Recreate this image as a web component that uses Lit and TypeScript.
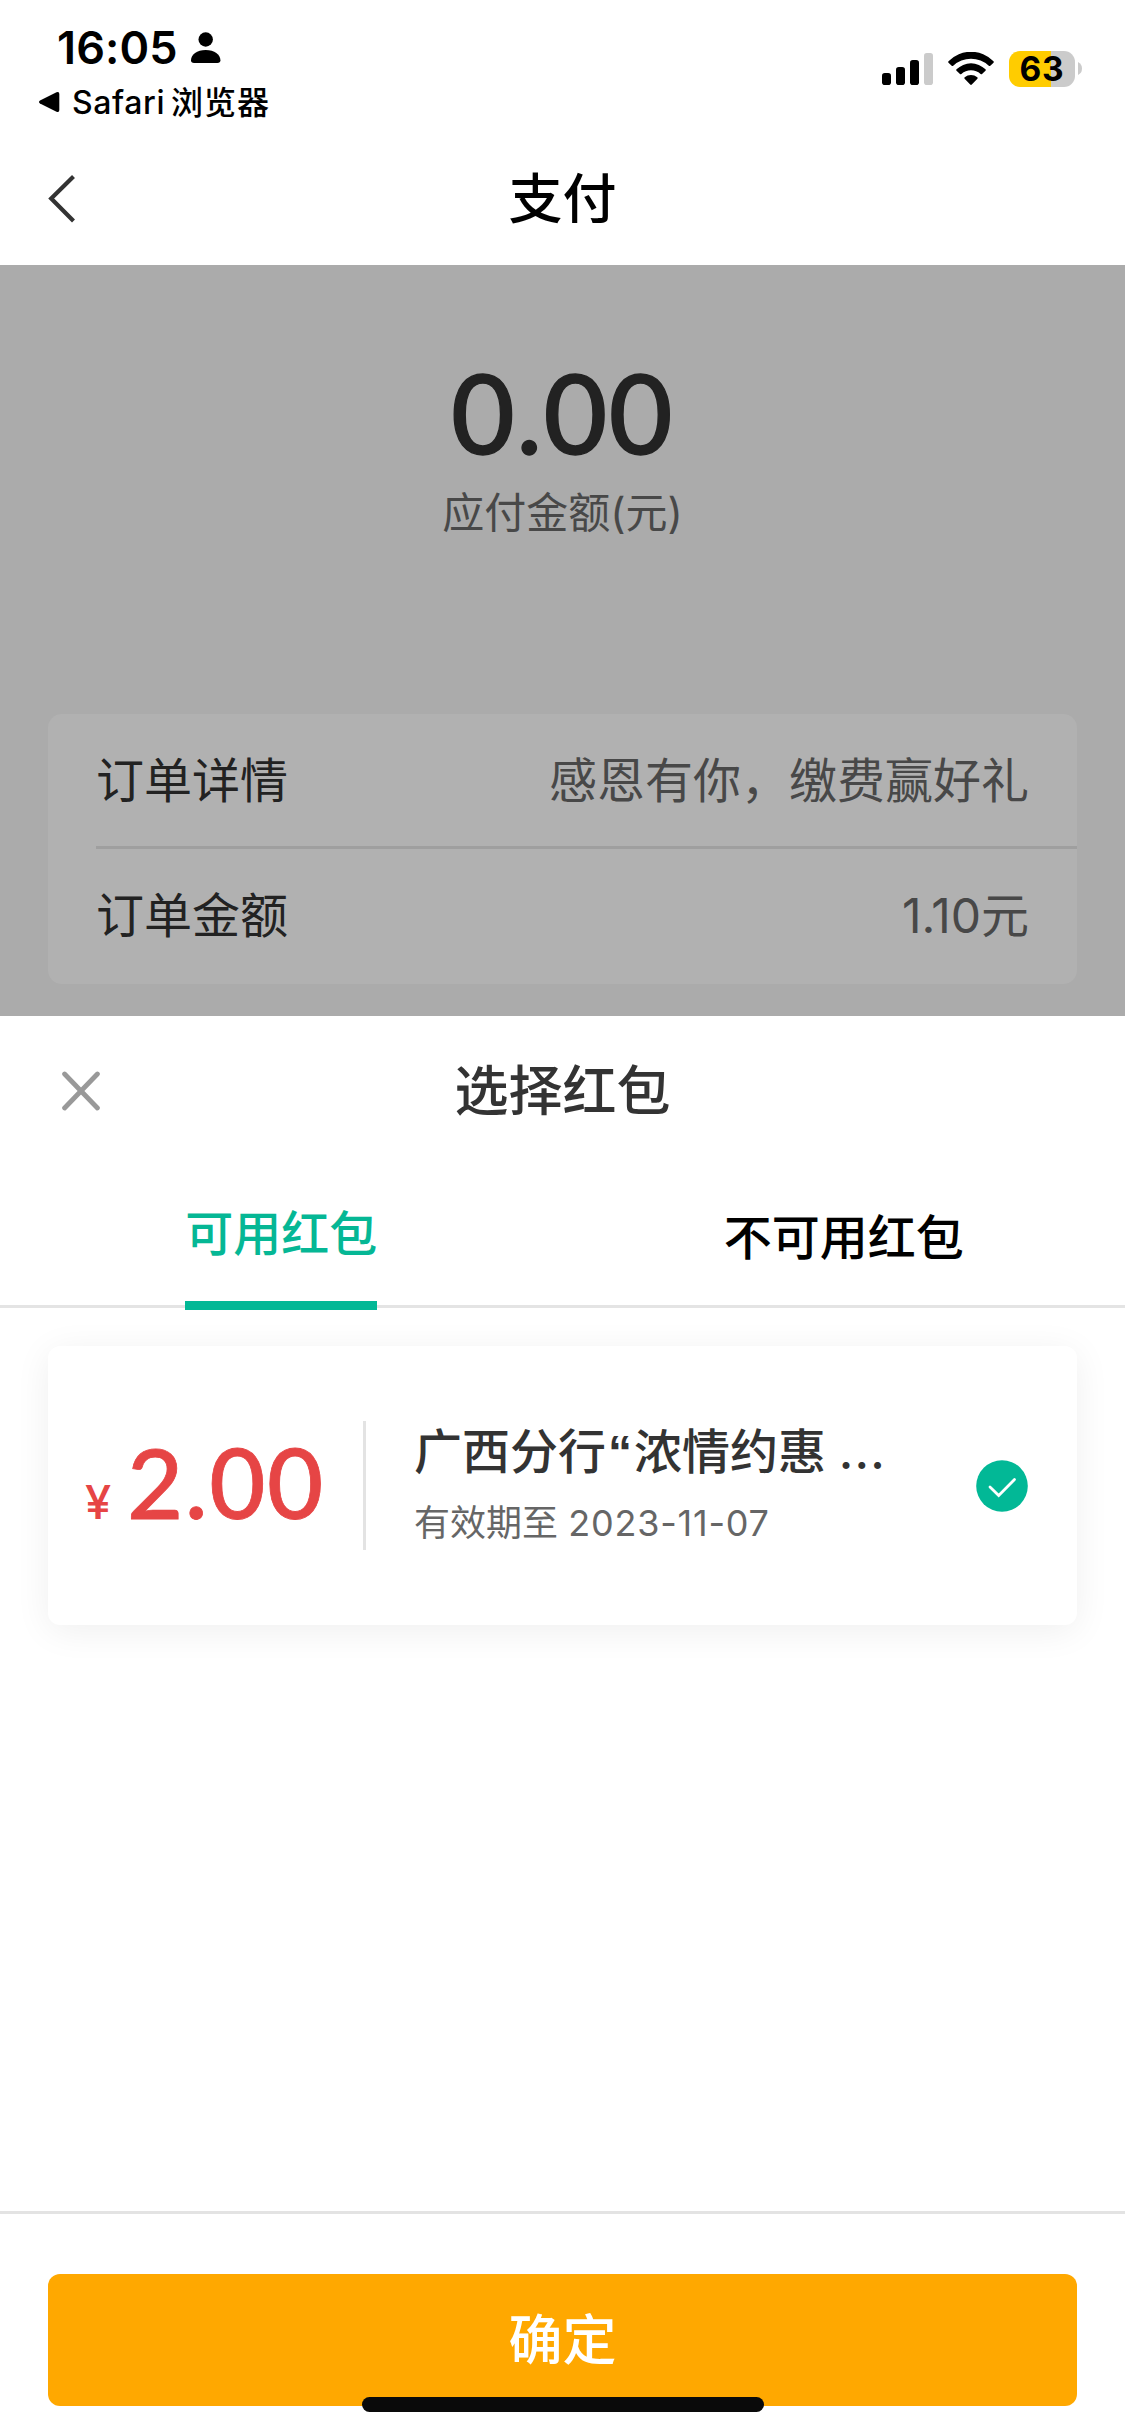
import { LitElement, html, css } from "lit";
import { customElement, property } from "lit/decorators.js";

@customElement("status-bar")
class StatusBar extends LitElement {
  static styles = css`
    :host { display: flex; justify-content: space-between; height: 132px; color: #000; }
    .left { display: flex; flex-direction: column; padding: 21px 0 0 39px; }
    .clock { display: flex; align-items: center; height: 54px; padding-left: 18px; }
    .clock svg { margin-top: -1px; }
    .time { font-size: 45px; font-weight: 600; letter-spacing: 0.1px; line-height: 54px; width: 134px; }
    .back { display: flex; align-items: center; height: 48px; margin-top: 3px; }
    .app { font-size: 32px; font-weight: 500; line-height: 50px; padding-top: 2px; margin-left: 12px; letter-spacing: 0.6px; display: flex; gap: 6px; }
    .cjk { letter-spacing: 1px; }
    .right { display: flex; align-items: flex-start; padding: 51px 43px 0 0; }
    .signal { margin: 2px 15px 0 0; }
    .wifi { margin: 1px 15px 0 0; }
    .battery { width: 66px; height: 36px; border-radius: 11px; line-height: 37px; text-align: center;
      font-size: 33.5px; font-weight: 650; letter-spacing: 0.8px;
      background: linear-gradient(90deg, #ffcc00 63%, #cbcbcb 63%); }
    .nub { margin: 11px 0 0 3px; }
    svg { display: block; }
  `;
  render() {
    return html`
      <div class="left">
        <div class="clock">
          <span class="time">16:05</span>
          <svg width="30" height="32" viewBox="0 0 30 32">
            <circle cx="14.7" cy="7.5" r="7.2" />
            <path d="M3 31C1 31 0 30 0 28.3C0 22.8 6 18 14.7 18S29.4 22.8 29.4 28.3C29.4 30 28.4 31 26.4 31Z" />
          </svg>
        </div>
        <div class="back">
          <svg width="21" height="22" viewBox="0 0 21 22">
            <path d="M1 9.6L17.5 1.3Q20.3.2 20.3 3V19Q20.3 21.8 17.5 20.7L1 12.6Q-1 11.1 1 9.6Z" />
          </svg>
          <span class="app"><span>Safari</span><span class="cjk">浏览器</span></span>
        </div>
      </div>
      <div class="right">
        <svg class="signal" width="51" height="32" viewBox="0 0 51 32">
          <rect x="0" y="20" width="9" height="12" rx="2.8" />
          <rect x="14" y="14" width="9" height="18" rx="2.8" />
          <rect x="28" y="7" width="9" height="25" rx="2.8" />
          <rect x="42" y="0" width="9" height="32" rx="2.8" fill="#cbcbcb" />
        </svg>
        <svg class="wifi" width="46" height="34" viewBox="0 0 46 34">
          <path d="M.5 9.2A31.5 31.5 0 0 1 45.5 9.2Q46.2 10 45.5 10.7L42.3 13.8Q41.6 14.4 40.8 13.7A26 26 0 0 0 5.2 13.7Q4.4 14.4 3.7 13.8L.5 10.7Q-.2 10 .5 9.2Z" />
          <path d="M8.5 17.3A20.6 20.6 0 0 1 37.5 17.3Q38.2 18 37.5 18.7L34 22Q33.4 22.5 32.6 21.9A14.5 14.5 0 0 0 13.4 21.9Q12.6 22.5 12 22L8.5 18.7Q7.8 18 8.5 17.3Z" />
          <path d="M16.7 25.3A9.8 9.8 0 0 1 29.3 25.3Q30.1 26 29.4 26.7L23.8 32.6Q23 33.4 22.2 32.6L16.6 26.7Q15.9 26 16.7 25.3Z" />
        </svg>
        <div class="battery">63</div>
        <svg class="nub" width="4" height="13" viewBox="0 0 4 13"><path d="M0 0Q4 2 4 6.5T0 13Z" fill="#cbcbcb" /></svg>
      </div>
    `;
  }
}

@customElement("order-summary")
class OrderSummary extends LitElement {
  @property({ attribute: false }) rows: { label: string; value: string }[] = [];
  static styles = css`
    :host { display: flex; flex-direction: column; height: 751px; background: #ababab; color: #222; }
    .amount { padding-top: 84px; height: 131px; line-height: 125px; text-align: center; font-family: Lato, Inter, sans-serif; font-size: 110px; font-weight: 500;
      letter-spacing: 1.4px; -webkit-text-stroke: 1.3px #222; }
    .caption { line-height: 60px; padding-top: 3px; text-align: center; font-size: 42px; color: #484848; }
    .card { margin: 171px 48px 0; border-radius: 14px; background: #b1b1b1; }
    .row { box-sizing: border-box; display: flex; justify-content: space-between; align-items: center; height: 135px; margin-left: 48px; padding-right: 48px; font-size: 48px; line-height: 68px; }
    .row:first-child { border-bottom: 3px solid #9f9f9f; padding-top: 2px; }
    .row:last-child { padding-bottom: 2px; }
    .value { color: #484848; }
  `;
  render() {
    return html`
      <div class="amount">0.00</div>
      <div class="caption">应付金额(元)</div>
      <div class="card">
        ${this.rows.map((r) => html`<div class="row"><span>${r.label}</span><span class="value">${r.value}</span></div>`)}
      </div>
    `;
  }
}

@customElement("coupon-card")
class CouponCard extends LitElement {
  static styles = css`
    :host { box-sizing: border-box; display: flex; align-items: center; height: 279px; margin: 38px 48px 0; border-radius: 12px;
      background: #fff; box-shadow: 0 6px 36px rgba(0, 0, 0, 0.065); padding: 0 49px 0 37px; }
    .price { display: flex; align-items: baseline; width: 278px; padding-top: 12px; color: #e64545; line-height: 116px; }
    .yen { font-size: 47px; width: 42px; font-weight: 500; }
    .num { font-family: Lato, Inter, sans-serif; font-size: 97px; font-weight: 500; letter-spacing: 1.5px; -webkit-text-stroke: 0.8px #e64545; }
    .rule { width: 3px; height: 129px; background: #e3e3e3; }
    .info { flex: 1; padding-left: 48px; }
    .name { font-size: 48px; font-weight: 500; line-height: 68px; height: 68px; margin-top: -6px; color: #333; white-space: nowrap; }
    .quote { font-family: "Liberation Sans", sans-serif; font-weight: 700; margin: 0 2px; }
    .dots { letter-spacing: 1.2px; }
    .date { font-size: 36px; line-height: 50px; margin-top: 12px; color: #666; white-space: nowrap; }
    .day { letter-spacing: 0.8px; }
    svg { display: block; }
  `;
  render() {
    return html`
      <div class="price"><span class="yen">¥</span><span class="num">2.00</span></div>
      <div class="rule"></div>
      <div class="info">
        <div class="name">广西分行<span class="quote">“</span>浓情约惠 <span class="dots">...</span></div>
        <div class="date">有效期至 <span class="day">2023-11-07</span></div>
      </div>
      <svg width="52" height="52" viewBox="0 0 52 52">
        <circle cx="26" cy="26" r="25.8" fill="#02b896" />
        <path d="M14 27L22.7 35.5L38.5 19.5" fill="none" stroke="#fff" stroke-width="2.8" stroke-linecap="round" />
      </svg>
    `;
  }
}

@customElement("app-root")
class AppRoot extends LitElement {
  private rows = [
    { label: "订单详情", value: "感恩有你，缴费赢好礼" },
    { label: "订单金额", value: "1.10元" },
  ];
  static styles = css`
    :host { display: flex; flex-direction: column; width: 1125px; height: 2436px; overflow: hidden; position: relative; background: #fff;
      font-family: Inter, "Noto Sans CJK SC", sans-serif; }
    .nav { display: grid; grid-template-columns: 1fr auto 1fr; align-items: center; height: 133px; padding: 0 48px; }
    .title { font-size: 54px; font-weight: 500; line-height: 76px; padding-top: 3px; }
    .sheet { flex: 1; display: flex; flex-direction: column; }
    .head { box-sizing: border-box; display: grid; grid-template-columns: 1fr auto 1fr; align-items: center; height: 148px; padding: 1px 62px 0; color: #333; }
    .tabs { display: flex; box-sizing: border-box; height: 144px; border-bottom: 3px solid #e4e4e4; }
    .tab { flex: 1; display: flex; justify-content: center; font-size: 48px; font-weight: 500; line-height: 147px; color: #000; }
    .on { box-sizing: border-box; height: 146px; line-height: 139px; color: #05b795; border-bottom: 9px solid #02b896; }
    .foot { box-sizing: border-box; margin-top: auto; height: 225px; border-top: 3px solid #e3e3e3; padding: 60px 48px 0; }
    .ok { height: 132px; border-radius: 12px; background: #ffa800; color: #fff; font-size: 54px; font-weight: 500; line-height: 133px; text-align: center; }
    .home { position: absolute; left: 362px; top: 2397px; width: 402px; height: 15px; border-radius: 8px; background: #0a0a0a; }
    svg { display: block; }
  `;
  render() {
    return html`
      <status-bar></status-bar>
      <div class="nav">
        <svg width="28" height="48" viewBox="0 0 28 48"><path d="M25.5 1.5L3.2 23.5L25.5 46" fill="none" stroke="#333" stroke-width="4.2" /></svg>
        <span class="title">支付</span>
      </div>
      <order-summary .rows=${this.rows}></order-summary>
      <div class="sheet">
        <div class="head">
          <svg width="38" height="40" viewBox="0 0 38 40"><path d="M2.6 3L35.4 37M35.4 3L2.6 37" stroke="#999" stroke-width="4.8" stroke-linecap="round" /></svg>
          <span class="title">选择红包</span>
        </div>
        <div class="tabs">
          <div class="tab"><span class="on">可用红包</span></div>
          <div class="tab">不可用红包</div>
        </div>
        <coupon-card></coupon-card>
        <div class="foot"><div class="ok">确定</div></div>
      </div>
      <div class="home"></div>
    `;
  }
}
